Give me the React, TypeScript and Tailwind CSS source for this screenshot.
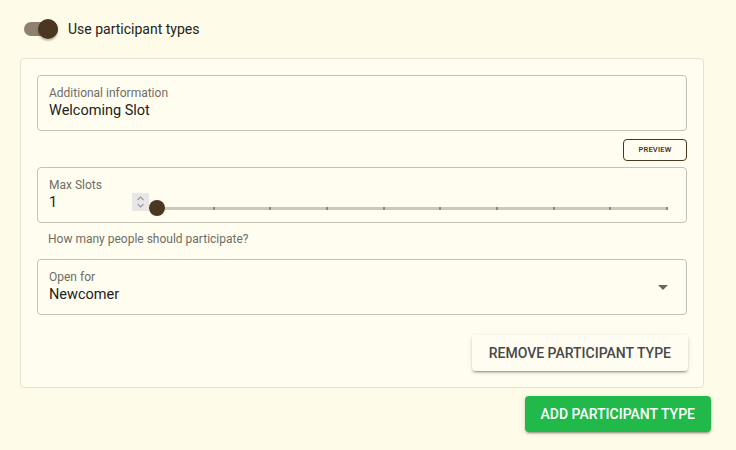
import React from "react";

function Field({ label, children }: { label: string; children: React.ReactNode }) {
  return (
    <div className="h-[56px] rounded-[4px] border border-[#c5c2b4] pl-[11px] pr-3 pt-[10px]">
      <div className="text-[12px] leading-[14px] text-[#6f6d66]">{label}</div>
      {children}
    </div>
  );
}

export default function App() {
  const ticks = Array.from({ length: 10 }, (_, i) => i);
  return (
    <div className="min-h-[450px] w-[736px] bg-[#fefbe8] font-['Roboto',sans-serif] pt-[18px]">
      {/* toggle row */}
      <div className="flex items-center h-[22px] pl-[24px]">
        <div className="relative w-[34px] h-[14px] rounded-full bg-[#8f8170]">
          <div className="absolute -top-[3px] left-[14px] w-[20px] h-[20px] rounded-full bg-[#4b3621] shadow-[0_2px_2px_rgba(0,0,0,0.25)]" />
        </div>
        <span className="ml-[10px] text-[14px] leading-[20px] text-[#222]">Use participant types</span>
      </div>

      {/* panel */}
      <div className="mx-5 mt-[18px] w-[684px] rounded-[4px] border border-[#e6e2cf] bg-[#fffdf0] px-4 pt-4 pb-4">
        <Field label="Additional information">
          <div className="mt-px text-[14.5px] leading-[19px] text-[#222]">Welcoming Slot</div>
        </Field>

        <div className="flex justify-end mt-2">
          <div className="w-[64px] h-[22px] rounded-[4px] border border-[#4b3621] flex items-center justify-center text-[7.5px] font-semibold tracking-[0.2px] text-[#4b3621]">
            PREVIEW
          </div>
        </div>

        <div className="mt-[6px]">
          <div className="h-[56px] rounded-[4px] border border-[#c5c2b4] pl-[11px] pt-[10px]">
            <div className="text-[12px] leading-[14px] text-[#6f6d66]">Max Slots</div>
            <div className="flex items-start">
              <div className="w-[83px] mt-px text-[14.5px] leading-[19px] text-[#222]">1</div>
              <div className="w-[17px] h-[18px] mt-[1px] bg-[#e9e7e6] flex flex-col items-center justify-center">
                <svg width="9" height="14" viewBox="0 0 9 14" fill="none" stroke="#9a98a8" strokeWidth="1.1">
                  <path d="M1.5 5 L4.5 2 L7.5 5" />
                  <path d="M1.5 9 L4.5 12 L7.5 9" />
                </svg>
              </div>
              <div className="relative ml-[8px] w-[510px] h-[19px] mt-[1px]">
                <div className="absolute left-0 right-0 top-[14px] h-[3px] bg-[#cbc9b9]" />
                {ticks.map((i) => (
                  <div
                    key={i}
                    className="absolute top-[14px] w-[2px] h-[3px] bg-[#8d8b7e]"
                    style={{ left: `${(i * 510) / 9 - 1}px` }}
                  />
                ))}
                <div className="absolute left-[-8px] top-[7px] w-[16px] h-[16px] rounded-full bg-[#4b3621]" />
              </div>
            </div>
          </div>
          <div className="pl-[11px] mt-[9px] text-[12px] leading-[14px] text-[#6f6d66]">How many people should participate?</div>
        </div>

        <div className="mt-[13px] relative">
          <Field label="Open for">
            <div className="mt-px text-[14.5px] leading-[19px] text-[#222]">Newcomer</div>
          </Field>
          <svg className="absolute right-[19px] top-[26px]" width="10" height="5" viewBox="0 0 10 5">
            <path d="M0 0 L10 0 L5 5 Z" fill="#666" />
          </svg>
        </div>

        <div className="flex justify-end mt-5 -mr-px">
          <div className="h-[36px] px-[17px] flex items-center rounded-[4px] bg-[#fffdf2] shadow-[0_3px_1px_-2px_rgba(0,0,0,0.2),0_2px_2px_0_rgba(0,0,0,0.14),0_1px_5px_0_rgba(0,0,0,0.12)] text-[14px] font-medium text-[#484848]">
            REMOVE PARTICIPANT TYPE
          </div>
        </div>
      </div>

      <div className="flex justify-end mt-[8px] pr-[25px]">
        <div className="h-[36px] px-4 flex items-center rounded-[4px] bg-[#22b94b] shadow-[0_3px_1px_-2px_rgba(0,0,0,0.2),0_2px_2px_0_rgba(0,0,0,0.14),0_1px_5px_0_rgba(0,0,0,0.12)] text-[14px] font-medium text-white">
          ADD PARTICIPANT TYPE
        </div>
      </div>
    </div>
  );
}
